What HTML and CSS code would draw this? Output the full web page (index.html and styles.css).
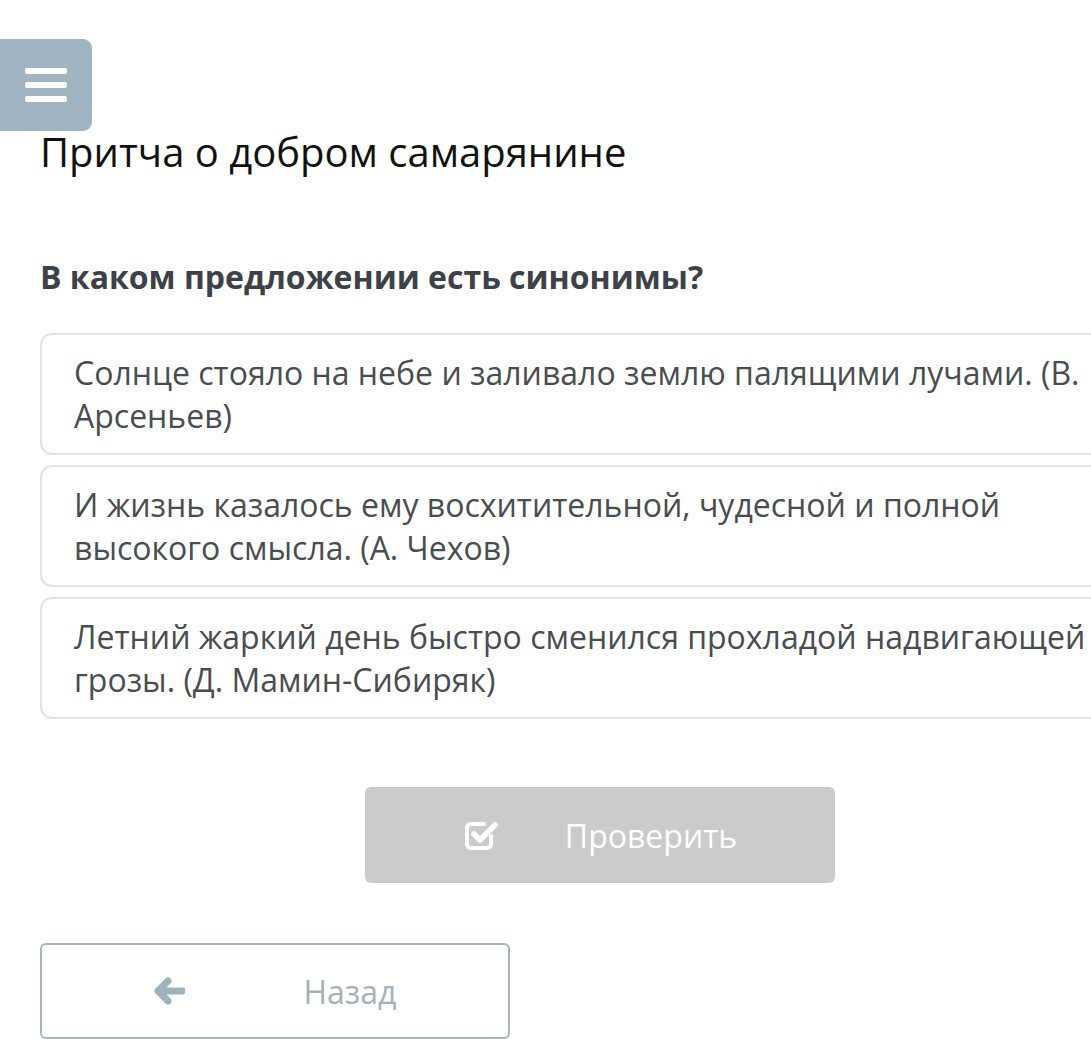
FILE: index.html
```html
<!DOCTYPE html>
<html lang="ru">
<head>
  <meta charset="UTF-8" />
  <meta name="viewport" content="width=device-width, initial-scale=1.0"/>
  <title>Притча о добром самарянине</title>
  <link rel="stylesheet" href="styles.css">
</head>
<body>
  <button class="menu-btn" aria-label="Меню">
    <span></span><span></span><span></span>
  </button>

  <div class="page">
    <h1 class="lesson-title">Притча о добром самарянине</h1>

    <h2 class="question">В каком предложении есть синонимы?</h2>

    <div class="answers">
      <div class="answer">Солнце стояло на небе и заливало землю палящими лучами. (В. Арсеньев)</div>
      <div class="answer">И жизнь казалось ему восхитительной, чудесной и полной высокого смысла. (А. Чехов)</div>
      <div class="answer">Летний жаркий день быстро сменился прохладой надвигающей грозы. (Д. Мамин-Сибиряк)</div>
    </div>

    <div class="check-row">
      <button class="check-btn" disabled>
        <svg class="check-icon" viewBox="0 0 36 34" width="36" height="34">
          <path d="M28 18v8a4 4 0 0 1-4 4H8a4 4 0 0 1-4-4V10a4 4 0 0 1 4-4h13" fill="none" stroke="#fff" stroke-width="4" stroke-linecap="round"/>
          <path d="M11 16l6 6L32 7" fill="none" stroke="#fff" stroke-width="5.5" stroke-linecap="round" stroke-linejoin="round"/>
        </svg>
        <span>Проверить</span>
      </button>
    </div>

    <button class="back-btn">
      <svg class="back-icon" viewBox="0 0 32 28" width="32" height="28">
        <path d="M29 14H6M15 4L5 14l10 10" fill="none" stroke="#9fb2c0" stroke-width="7" stroke-linecap="round" stroke-linejoin="round"/>
      </svg>
      <span>Назад</span>
    </button>
  </div>
</body>
</html>
```

FILE: styles.css
```css
html {
  overflow: hidden;
}
body {
  margin: 0;
  font-family: 'Open Sans', 'Noto Sans', sans-serif;
  background: #fff;
  color: #4a4d50;
}
.menu-btn {
  position: absolute;
  top: 39px;
  left: 0;
  width: 92px;
  height: 92px;
  border: none;
  border-radius: 0 9px 9px 0;
  background-color: #a0b4c1;
  display: flex;
  flex-direction: column;
  justify-content: center;
  align-items: center;
  gap: 8px;
  padding: 0;
}
.menu-btn span {
  display: block;
  width: 42px;
  height: 6px;
  border-radius: 2px;
  background: #fff;
}
.page {
  width: 1120px;
  padding: 124px 0 0 40px;
}
.lesson-title {
  margin: 0;
  font-size: 40px;
  font-weight: 400;
  line-height: 56px;
  color: #111;
}
.question {
  margin: 75px 0 0;
  font-size: 32px;
  font-weight: 700;
  line-height: 44px;
  color: #3d4248;
}
.answers {
  margin-top: 34px;
  display: flex;
  flex-direction: column;
  gap: 10px;
}
.answer {
  border: 2px solid #e3e3e3;
  border-radius: 12px;
  padding: 16px 34px 16px 32px;
  font-size: 32px;
  line-height: 43px;
  color: #4a4d50;
}
.check-row {
  display: flex;
  justify-content: center;
  margin-top: 68px;
}
button {
  font-family: inherit;
}
.check-btn {
  width: 470px;
  height: 96px;
  border: none;
  border-radius: 6px;
  background-color: #cbcbcb;
  color: #fff;
  font-size: 32px;
  display: flex;
  justify-content: center;
  align-items: center;
  gap: 66px;
}
.back-btn {
  margin-top: 60px;
  width: 470px;
  height: 96px;
  border: 2px solid #a8b5bd;
  border-radius: 6px;
  background: #fff;
  color: #a6b2ba;
  font-size: 32px;
  display: flex;
  justify-content: center;
  align-items: center;
  gap: 118px;
}
.check-icon, .back-icon {
  flex: none;
}
```
